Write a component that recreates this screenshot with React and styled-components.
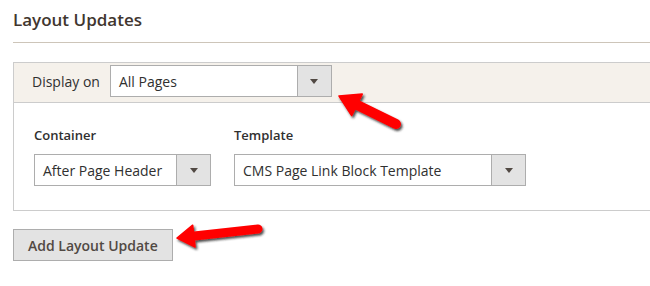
import React from "react";
import styled, { createGlobalStyle } from "styled-components";

const GlobalStyle = createGlobalStyle`
  html, body {
    margin: 0;
    padding: 0;
    background: #fff;
    overflow: hidden;
  }
  body {
    font-family: "Open Sans", "Liberation Sans", sans-serif;
    color: #303030;
  }
`;

const Page = styled.div`
  position: relative;
  width: 650px;
  height: 286px;
  padding-left: 13px;
  box-sizing: border-box;
  overflow: hidden;
`;

const Title = styled.h2`
  margin: 0;
  padding: 10px 0 12px;
  font-size: 17px;
  line-height: 20px;
  font-weight: 600;
  color: #41362f;
  border-bottom: 1px solid #cdc5b9;
`;

const Panel = styled.div`
  margin-top: 19px;
  margin-right: -4px;
  border: 1px solid #cccccc;
`;

const PanelHead = styled.div`
  display: flex;
  align-items: center;
  gap: 10px;
  padding: 2px 18px 5px;
  background: #f5f1eb;
  border-bottom: 1px solid #cccccc;
`;

const HeadLabel = styled.span`
  font-size: 14px;
  color: #303030;
`;

const PanelBody = styled.div`
  display: flex;
  gap: 23px;
  padding: 23px 20px 24px;
`;

const Field = styled.div`
  display: flex;
  flex-direction: column;
  gap: 9px;
`;

const FieldLabel = styled.label`
  font-size: 13px;
  line-height: 19px;
  font-weight: 600;
  color: #303030;
`;

const Select = styled.div`
  display: flex;
  width: ${(p) => p.$width}px;
  height: 32px;
  box-sizing: border-box;
  border: 1px solid #adadad;
  background: #fff;
`;

const SelectValue = styled.div`
  flex: 1;
  display: flex;
  align-items: center;
  padding-left: 8px;
  font-size: 14px;
  color: #303030;
  white-space: nowrap;
`;

const SelectArrow = styled.div`
  width: 33px;
  display: flex;
  align-items: center;
  justify-content: center;
  background: #e3e3e3;
  border-left: 1px solid #adadad;

  &::after {
    content: "";
    border-left: 4px solid transparent;
    border-right: 4px solid transparent;
    border-top: 5px solid #514943;
  }
`;

const AddButton = styled.button`
  margin-top: 18px;
  height: 32px;
  padding: 0 14px;
  font-family: inherit;
  font-size: 14px;
  font-weight: 600;
  color: #514943;
  background: #e3e3e3;
  border: 1px solid #adadad;
  border-radius: 0;
`;

const Overlay = styled.svg`
  position: absolute;
  left: 0;
  top: 0;
  pointer-events: none;
`;

function Dropdown({ width, value }) {
  return (
    <Select $width={width}>
      <SelectValue>{value}</SelectValue>
      <SelectArrow />
    </Select>
  );
}

function Arrow({ tip, tail, headLen, headHalf, shaft }) {
  const dx = tip[0] - tail[0];
  const dy = tip[1] - tail[1];
  const len = Math.hypot(dx, dy);
  const ux = dx / len;
  const uy = dy / len;
  const nx = -uy;
  const ny = ux;
  const bx = tip[0] - headLen * ux;
  const by = tip[1] - headLen * uy;
  const head = [
    [tip[0], tip[1]],
    [bx + headHalf * nx, by + headHalf * ny],
    [bx - headHalf * nx, by - headHalf * ny],
  ]
    .map((p) => p.join(","))
    .join(" ");
  return (
    <g filter="url(#shade)">
      <line
        x1={tail[0]}
        y1={tail[1]}
        x2={bx + ux * 2}
        y2={by + uy * 2}
        stroke="#ff0000"
        strokeWidth={shaft}
        strokeLinecap="round"
      />
      <polygon points={head} fill="#ff0000" strokeLinejoin="round" stroke="#ff0000" strokeWidth="1.5" />
    </g>
  );
}

export default function App() {
  return (
    <>
      <GlobalStyle />
      <Page>
        <Title>Layout Updates</Title>
        <Panel>
          <PanelHead>
            <HeadLabel>Display on</HeadLabel>
            <Dropdown width={222} value="All Pages" />
          </PanelHead>
          <PanelBody>
            <Field>
              <FieldLabel>Container</FieldLabel>
              <Dropdown width={177} value="After Page Header" />
            </Field>
            <Field>
              <FieldLabel>Template</FieldLabel>
              <Dropdown width={292} value="CMS Page Link Block Template" />
            </Field>
          </PanelBody>
        </Panel>
        <AddButton>Add Layout Update</AddButton>

        <Overlay width="650" height="286">
          <defs>
            <filter id="shade" x="-20%" y="-40%" width="140%" height="180%">
              <feDropShadow dx="1.5" dy="2" stdDeviation="1.2" floodColor="#222" floodOpacity="0.8" />
            </filter>
          </defs>
          <Arrow tip={[339, 96]} tail={[396, 124]} headLen={20} headHalf={12} shaft={10} />
          <Arrow tip={[177, 238]} tail={[258, 229]} headLen={17} headHalf={11} shaft={9} />
        </Overlay>
      </Page>
    </>
  );
}
